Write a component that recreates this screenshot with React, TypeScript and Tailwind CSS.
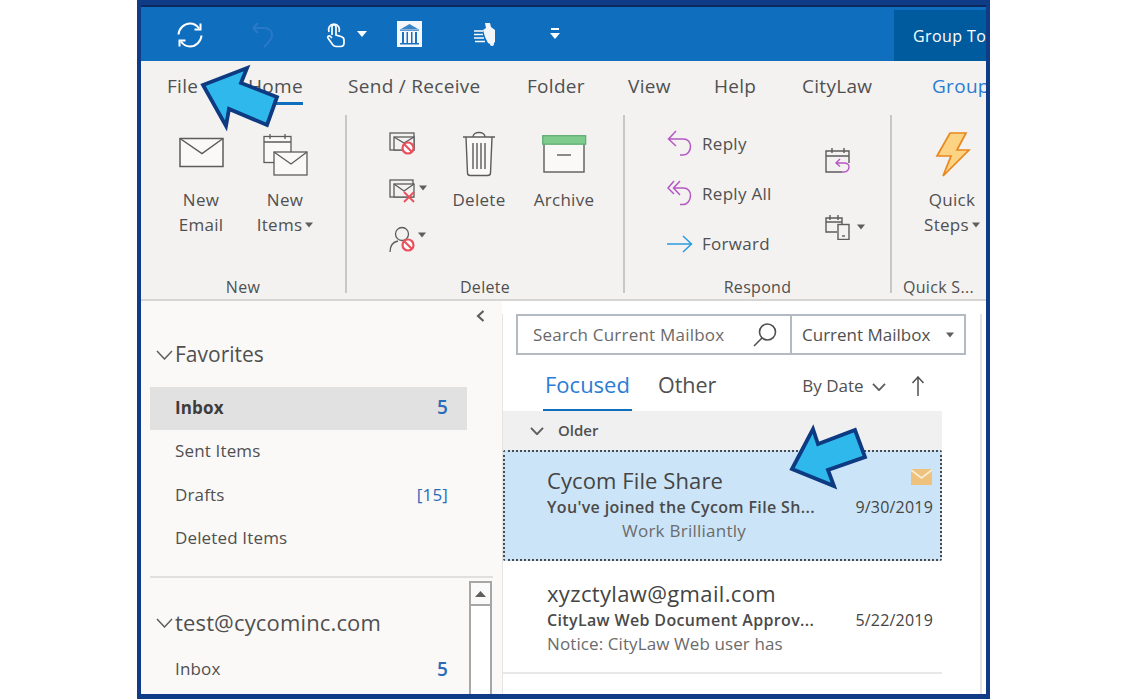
const FONT = "font-['Open_Sans','Noto_Sans',sans-serif]";

const Caret = ({ className = "", color = "#605e5c" }: { className?: string; color?: string }) => (
  <svg width="10" height="6" viewBox="0 0 10 6" className={className}><path d="M0 0h10L5 6z" fill={color} /></svg>
);

const Sync = () => (
  <svg width="28" height="28" viewBox="0 0 28 28" fill="none" stroke="#fff" strokeWidth="2">
    <path d="M2.500 13.500C3 7.500 8 2.500 14 2.500c4 0 7 2 9 5" />
    <path d="M24.500 2.500v6h-6" />
    <path d="M25.500 14.500c-.5 6-5.500 11-11.500 11-4 0-7-2-9-5" />
    <path d="M3.500 25.500v-6h6" />
  </svg>
);
const Undo = () => (
  <svg width="24" height="28" viewBox="0 0 24 28" fill="none" stroke="#2a79c9" strokeWidth="2">
    <path d="M2 8l5 5M2 8l5-5M2 8h11c5 0 8 3 8 7s-3 7-6 10l-2 2" />
  </svg>
);
const Touch = () => (
  <svg width="20" height="27" viewBox="0 0 20 27" fill="none" stroke="#fff" strokeWidth="1.700">
    <path d="M3 11a5.500 5.500 0 1 1 10 0" />
    <path d="M6 14V6a2 2 0 0 1 4 0v8l5 1.500c2 .6 3 1.600 3 3.500v3c0 2-1.500 3.500-3.500 3.500H10c-1.500 0-2.500-.7-3.500-2L2 17c-1-1.500 1-3 2.500-1.500L6 17" />
  </svg>
);
const Building = () => (
  <svg width="25" height="26" viewBox="0 0 25 26">
    <rect width="25" height="26" fill="#f4f8fc" />
    <path d="M4 8l8.500-5L21 8z" fill="#3a85c8" />
    <rect x="3" y="8.500" width="19" height="1.200" fill="#1d70bd" />
    <path d="M5 11h2v11H5zM9.500 11h1.500v11H9.500zM14 11h1.500v11H14zM18 11h2v11h-2z" fill="#1d70bd" />
    <rect x="3" y="22" width="19" height="1.500" fill="#1d70bd" />
  </svg>
);
const Runner = () => (
  <svg width="23" height="25" viewBox="0 0 23 25" fill="none">
    <path d="M11 1h5l1 4 4 3v12l-3 3-4-2-3-6-2-7 3-2z" fill="#f2f6fb" />
    <path d="M0 9h9M0 12.500h9M0 16h10M1 19.500h10" stroke="#fff" strokeWidth="1.500" />
    <circle cx="18" cy="22" r="2" fill="#f2f6fb" />
  </svg>
);
const Customize = () => (
  <svg width="10" height="14" viewBox="0 0 10 14">
    <rect x="1" y="1" width="8" height="2" fill="#fff" />
    <path d="M0 6h10l-5 6z" fill="#fff" />
  </svg>
);

const Envelope = () => (
  <svg width="46" height="32" viewBox="0 0 46 32" fill="#faf9f8" stroke="#5c5c5c" strokeWidth="1.500">
    <rect x="1" y="1.500" width="43" height="28" />
    <path d="M1 1.500l22 15 21-15" fill="none" />
  </svg>
);
const NewItems = () => (
  <svg width="46" height="44" viewBox="0 0 46 44" fill="none" stroke="#5c5c5c" strokeWidth="1.300">
    <rect x="1" y="3.500" width="27" height="26" fill="#faf9f8" />
    <path d="M1 9h27M7 1v5M22 1v5" />
    <rect x="11" y="19" width="33" height="23" fill="#faf9f8" />
    <path d="M11 19l17 12 16-12" />
  </svg>
);
const Ban = ({ x, y }: { x: number; y: number }) => (
  <g fill="none" stroke="#e8505b" strokeWidth="2.200">
    <circle cx={x} cy={y} r="5.500" fill="#fff" />
    <path d={`M${x - 4} ${y - 4}l8 8`} />
  </g>
);
const IgnoreIcon = () => (
  <svg width="27" height="24" viewBox="0 0 27 24" fill="none" stroke="#5c5c5c" strokeWidth="1.300">
    <rect x="1" y="1" width="24" height="17" />
    <rect x="5" y="5" width="20" height="13" fill="#f3f2f1" />
    <path d="M5 5l10 6 10-6" />
    <Ban x={19} y={16} />
  </svg>
);
const CleanIcon = () => (
  <svg width="27" height="24" viewBox="0 0 27 24" fill="none" stroke="#5c5c5c" strokeWidth="1.300">
    <rect x="1" y="1" width="23" height="17" />
    <rect x="5" y="5" width="20" height="13" fill="#f3f2f1" />
    <path d="M5 5l10 7 10-7" />
    <path d="M15 13l10 10M25 13L15 23" stroke="#e8505b" strokeWidth="1.800" />
  </svg>
);
const JunkIcon = () => (
  <svg width="26" height="27" viewBox="0 0 26 27" fill="none" stroke="#5c5c5c" strokeWidth="1.300">
    <circle cx="13" cy="8" r="6.500" />
    <path d="M1 26c0-6 3-10 8-11M17 14l3 2" />
    <Ban x={19} y={19} />
  </svg>
);
const Trash = () => (
  <svg width="34" height="46" viewBox="0 0 34 46" fill="#faf9f8" stroke="#5c5c5c" strokeWidth="1.400">
    <path d="M4 6l1.500 36q0 2.500 3 2.500h17q3 0 3-2.500L30 6" />
    <path d="M1 6h32M11 6c0-6 12-6 12 0" />
    <path d="M11 12v26M15 12v26M19 12v26M23 12v26" fill="none" />
  </svg>
);
const ArchiveIcon = () => (
  <svg width="45" height="38" viewBox="0 0 45 38">
    <rect x="2" y="8" width="40" height="29" fill="#faf9f8" stroke="#5c5c5c" strokeWidth="1.400" />
    <rect x=".7" y=".7" width="43" height="8.500" fill="#7fcb8e" stroke="#5cab70" strokeWidth="1.200" />
    <path d="M15 20h14" stroke="#5c5c5c" strokeWidth="1.400" />
  </svg>
);
const ReplyIcon = () => (
  <svg width="26" height="27" viewBox="0 0 26 27" fill="none" stroke="#b557c4" strokeWidth="1.500">
    <path d="M9 1L1.500 9 9 16M1.500 9h15c4 0 7 3 7 7.500s-3 8.500-7.500 8.500h-3" />
  </svg>
);
const ReplyAllIcon = () => (
  <svg width="26" height="27" viewBox="0 0 26 27" fill="none" stroke="#b557c4" strokeWidth="1.500">
    <path d="M7 1L1 8l6 6M13 1L6.500 8l6.500 7M6.500 8h10c4 0 7 3 7 7.500s-3 9-7.500 9h-3" />
  </svg>
);
const ForwardIcon = () => (
  <svg width="26" height="18" viewBox="0 0 26 18" fill="none" stroke="#2b9be0" strokeWidth="1.500">
    <path d="M0 9h24M16 1l8.500 8-8.500 8" />
  </svg>
);
const CalReply = () => (
  <svg width="26" height="27" viewBox="0 0 26 27" fill="none" strokeWidth="1.400">
    <path d="M17 25H1V4h23v12M1 9h23M7 1v5M19 1v5" stroke="#5c5c5c" />
    <path d="M15 12l-4 4 4 3.500M11 16h8c3 0 5 1.500 5 4s-2 5-5 5h-2" stroke="#b557c4" />
  </svg>
);
const CalDevice = () => (
  <svg width="25" height="26" viewBox="0 0 25 26" fill="none" stroke="#5c5c5c" strokeWidth="1.400">
    <path d="M12 18H1V4h16v6M1 8h16M5 1v5M13 1v5" />
    <rect x="13" y="10.500" width="11" height="15" />
    <path d="M17 22h3" />
  </svg>
);
const Bolt = () => (
  <svg width="36" height="46" viewBox="0 0 36 46">
    <path d="M15 1h16L22 18h12L8 44l8-20H2z" fill="#fcd382" stroke="#e8871e" strokeWidth="1.700" strokeLinejoin="miter" />
  </svg>
);
const Chevron = ({ size = 17, color = "#605e5c", sw = 1.5 }: { size?: number; color?: string; sw?: number }) => (
  <svg width={size} height={Math.round(size * 0.6)} viewBox="0 0 17 10" fill="none" stroke={color} strokeWidth={sw}>
    <path d="M1 1l7.500 8L16 1" />
  </svg>
);
const Big = ({ icon, l1, l2, caret, iconH }: { icon: React.ReactNode; l1: string; l2?: string; caret?: boolean; iconH: string }) => (
  <div className="flex flex-col items-center text-[17px] leading-[25px] tracking-[0.3px] text-[#505050]">
    <div className={`flex items-end justify-center ${iconH}`}>{icon}</div>
    <div>{l1}</div>
    {l2 && <div className="flex items-center gap-[3px]">{l2}{caret && <Caret className="w-[8px]" />}</div>}
  </div>
);
const Arrow = ({ points, className }: { points: string; className: string }) => (
  <svg className={`absolute ${className}`} width="90" height="70" viewBox="0 0 90 70">
    <polygon points={points} fill="#2fb8ec" stroke="#0d3a80" strokeWidth="3.800" strokeLinejoin="miter" />
  </svg>
);
const Count = ({ children }: { children: React.ReactNode }) => (
  <span className="text-[#2b6cb8] text-[19px] font-semibold leading-none">{children}</span>
);
const GroupLabel = ({ children }: { children: React.ReactNode }) => (
  <div className="text-center text-[16px] leading-[20px] tracking-[0.3px] text-[#505050] -mb-[4px]">{children}</div>
);

export default function App() {
  return (
    <div className={`relative w-[1124px] h-[699px] bg-white overflow-hidden ${FONT}`}>
      <div className="ml-[137px] w-[853px] h-[699px] border-x-4 border-t-[5px] border-b-[5px] border-[#0f3b87] flex flex-col overflow-hidden">
        <div className="h-[2px] bg-[#0a2a5e] shrink-0" />
        {/* title bar */}
        <div className="h-[54px] shrink-0 bg-[#106ebe] flex items-center relative">
          <div className="ml-[35px] w-[28px] mt-[2px]"><Sync /></div>
          <div className="ml-[47px]"><Undo /></div>
          <div className="ml-[51px]"><Touch /></div>
          <Caret color="#fff" className="ml-[11px]" />
          <div className="ml-[30px]"><Building /></div>
          <div className="ml-[52px]"><Runner /></div>
          <div className="ml-[53px]"><Customize /></div>
          <div className="ml-auto self-end h-[51px] w-[92px] bg-[#005a9e] pl-[19px] flex items-center text-white text-[16px] tracking-[0.4px] font-medium whitespace-nowrap overflow-hidden">Group To</div>
        </div>
        {/* ribbon */}
        <div className="h-[240px] shrink-0 bg-[#f3f2f1] border-b-2 border-[#d6d5d3] flex flex-col">
          <div className="h-[54px] flex pl-[26px] items-start pt-[11px] text-[19px] leading-[28px] tracking-[0.3px] text-[#505050] whitespace-nowrap">
            <div className="w-[81px] shrink-0">File</div>
            <div className="w-[100px] shrink-0"><span className="inline-block border-b-[3px] border-[#106ebe] h-[33px]">Home</span></div>
            <div className="w-[179px] shrink-0">Send / Receive</div>
            <div className="w-[101px] shrink-0">Folder</div>
            <div className="w-[86px] shrink-0">View</div>
            <div className="w-[88px] shrink-0">Help</div>
            <div className="w-[130px] shrink-0">CityLaw</div>
            <div className="shrink-0 text-[#2b7cd3]">Group</div>
          </div>
          <div className="flex h-[178px]">
            {/* New */}
            <div className="w-[206px] shrink-0 border-r-2 border-[#c8c7c5] flex flex-col justify-between">
              <div className="flex pl-[18px]">
                <div className="w-[84px]"><Big iconH="h-[72px] pb-[18px] pl-[1px]" icon={<Envelope />} l1="New" l2="Email" /></div>
                <div className="w-[84px]"><Big iconH="h-[72px] pb-[10px] pl-[2px]" icon={<NewItems />} l1="New" l2="Items" caret /></div>
              </div>
              <GroupLabel>New</GroupLabel>
            </div>
            {/* Delete */}
            <div className="w-[278px] shrink-0 border-r-2 border-[#c8c7c5] flex flex-col justify-between">
              <div className="flex">
                <div className="w-[42px] ml-[42px] pt-[17px] flex flex-col gap-[23px]">
                  <IgnoreIcon />
                  <div className="flex items-start gap-[3px]"><CleanIcon /><Caret className="w-[8px] mt-[6px]" /></div>
                  <div className="flex items-start gap-[3px]"><JunkIcon /><Caret className="w-[8px] mt-[6px]" /></div>
                </div>
                <div className="w-[86px] ml-[5px]"><Big iconH="h-[72px] pb-[10px]" icon={<Trash />} l1="Delete" /></div>
                <div className="w-[84px]"><Big iconH="h-[72px] pb-[14px]" icon={<ArchiveIcon />} l1="Archive" /></div>
              </div>
              <GroupLabel>Delete</GroupLabel>
            </div>
            {/* Respond */}
            <div className="w-[267px] shrink-0 border-r-2 border-[#c8c7c5] flex flex-col justify-between">
              <div className="flex pt-[15px]">
                <div className="w-[158px] pl-[42px] flex flex-col gap-[23px] text-[17px] leading-[27px] tracking-[0.3px] text-[#505050]">
                  <div className="flex items-center gap-[9px]"><ReplyIcon />Reply</div>
                  <div className="flex items-center gap-[9px]"><ReplyAllIcon />Reply All</div>
                  <div className="flex items-center gap-[9px]"><ForwardIcon />Forward</div>
                </div>
                <div className="ml-[42px] pt-[17px] flex flex-col gap-[40px]">
                  <CalReply />
                  <div className="flex items-center gap-[7px]"><CalDevice /><Caret className="w-[8px]" /></div>
                </div>
              </div>
              <GroupLabel>Respond</GroupLabel>
            </div>
            {/* Quick */}
            <div className="w-[94px] shrink-0 flex flex-col justify-between">
              <div className="w-[120px]"><Big iconH="h-[72px] pb-[9px] pl-[2px]" icon={<Bolt />} l1="Quick" l2="Steps" caret /></div>
              <div className="pl-[11px] text-[16px] leading-[20px] tracking-[0.3px] text-[#505050] whitespace-nowrap -mb-[4px]">Quick S...</div>
            </div>
          </div>
        </div>
        {/* lower */}
        <div className="flex-1 flex min-h-0">
          {/* folders */}
          <div className="w-[361px] shrink-0 bg-[#faf9f8] flex flex-col text-[#505050]">
            <div className="h-[29px] flex justify-end items-center pr-[17px]">
              <svg width="9" height="12" viewBox="0 0 9 12" fill="none" stroke="#605e5c" strokeWidth="2.200"><path d="M7.500 1L2 6l5.500 5" /></svg>
            </div>
            <div className="h-[49px] flex items-center pl-[15px] text-[21px]">
              <Chevron />
              <span className="ml-[2px]">Favorites</span>
            </div>
            <div className="ml-[9px] w-[317px] text-[17px] tracking-[0.15px]">
              <div className="h-[8px]" />
              <div className="h-[43px] bg-[#e1e1e1] flex items-center justify-between pl-[25px] pr-[19px] pb-[2px]"><span className="font-bold text-[#3c3c3c]">Inbox</span><Count>5</Count></div>
              <div className="h-[44px] flex items-center pl-[25px] pb-[2px]">Sent Items</div>
              <div className="h-[43px] flex items-center justify-between pl-[25px] pr-[19px] pb-[2px]">Drafts<span className="text-[#2b6cb8]">[15]</span></div>
              <div className="h-[44px] flex items-center pl-[25px] pb-[2px]">Deleted Items</div>
            </div>
            <div className="mt-[15px] ml-[9px] w-[343px] h-[2px] bg-[#e1e0de]" />
            <div className="flex-1 flex min-h-0">
              <div className="w-[328px]">
                <div className="h-[45px] mt-[22px] flex items-center pl-[15px] text-[22px] tracking-[0.15px] whitespace-nowrap">
                  <Chevron />
                  <span className="ml-[2px]">test@cycominc.com</span>
                </div>
                <div className="ml-[9px] mt-[2px] w-[317px] h-[44px] flex items-center justify-between pl-[25px] pr-[19px] text-[17px] tracking-[0.15px]">Inbox<Count>5</Count></div>
              </div>
              <div className="w-[23px] mt-[3px] border-x-2 border-t-2 border-[#a6a6a6] bg-white">
                <div className="h-[23px] border-b-2 border-[#a6a6a6] flex items-center justify-center bg-[#fafafa]">
                  <svg width="11" height="6" viewBox="0 0 11 6"><path d="M0 6h11L5.500 0z" fill="#605e5c" /></svg>
                </div>
              </div>
            </div>
          </div>
          {/* list */}
          <div className="flex-1 flex bg-white">
            <div className="w-[480px] mt-[13px] border-r-2 border-l border-[#e4e4e4] flex flex-col">
              <div className="ml-[13px] w-[450px] h-[41px] border-2 border-[#b4bac2] flex items-center text-[17px] text-[#6a6a6a]">
                <div className="w-[274px] h-full border-r-2 border-[#b4bac2] flex items-center justify-between pl-[15px] pr-[12px]">
                  <span className="tracking-[0.22px]">Search Current Mailbox</span>
                  <svg width="26" height="26" viewBox="0 0 26 26" fill="none" stroke="#505050" strokeWidth="1.600"><circle cx="15.500" cy="10" r="8" /><path d="M10 16L2 24" /></svg>
                </div>
                <div className="flex-1 flex items-center justify-between pl-[10px] pr-[10px] text-[#505050]">
                  <span>Current Mailbox</span><Caret className="w-[8px]" />
                </div>
              </div>
              <div className="h-[56px] flex items-center shrink-0 relative">
                <span className="ml-[40px] h-[56px] flex items-center border-b-2 border-[#106ebe] px-[2px] text-[22px] text-[#2b7cd3] pt-[4px]">Focused</span>
                <span className="ml-[26px] text-[21.5px] text-[#505050] pt-[4px]">Other</span>
                <span className="ml-[86px] text-[17px] text-[#505050] pt-[6px]">By Date</span>
                <span className="ml-[8px] pt-[7px]"><Chevron size={14} sw={2.200} /></span>
                <svg className="ml-[25px] mt-[6px]" width="14" height="20" viewBox="0 0 14 20" fill="none" stroke="#505050" strokeWidth="1.500"><path d="M7 20V1M1.500 7L7 1l5.500 6" /></svg>
              </div>
              <div className="w-[439px]">
                <div className="h-[39px] bg-[#f0f0f0] flex items-center pl-[27px] text-[15px] font-semibold text-[#505050]">
                  <Chevron size={14} sw={2.400} /><span className="ml-[14px]">Older</span>
                </div>
                <div className="h-[111px] bg-[#cce4f7] border-2 border-dotted border-[#4a4a4a] rounded-[2px] pl-[42px] pr-[7px] relative text-[#444]">
                  <div className="flex justify-between pt-[13px]">
                    <span className="text-[22px] leading-[30px] tracking-[0.1px]">Cycom File Share</span>
                    <svg className="mt-[4px] mr-[1px]" width="21" height="16" viewBox="0 0 21 16"><rect width="21" height="16" fill="#eec27c" /><path d="M0 1l10.500 8L21 1" fill="none" stroke="#fbeed8" strokeWidth="1.600" /></svg>
                  </div>
                  <div className="flex justify-between text-[16px] leading-[22px] mt-[1px]">
                    <span className="font-semibold tracking-[0.35px] text-[#4a4a4a] whitespace-nowrap">You've joined the Cycom File Sh...</span>
                    <span className="tracking-[0.2px]">9/30/2019</span>
                  </div>
                  <div className="pl-[75px] text-[17px] leading-[24px] tracking-[0.25px] mt-[1px] text-[#6b6b6b]">Work Brilliantly</div>
                </div>
                <div className="h-[113px] border-b-2 border-[#e8e8e8] pl-[44px] pr-[9px] text-[#444]">
                  <div className="text-[22px] leading-[30px] tracking-[0.35px] pt-[17px] box-content">xyzctylaw@gmail.com</div>
                  <div className="flex justify-between text-[16px] leading-[22px] mt-[1px]">
                    <span className="font-semibold tracking-[0.35px] text-[#4a4a4a] whitespace-nowrap">CityLaw Web Document Approv...</span>
                    <span className="tracking-[0.2px]">5/22/2019</span>
                  </div>
                  <div className="text-[17px] leading-[26px] tracking-[0.1px] text-[#6b6b6b]">Notice: CityLaw Web user has</div>
                </div>
              </div>
            </div>
          </div>
        </div>
      </div>
      {/* callout arrows */}
      <Arrow className="left-[195px] top-[62px]" points="8,23 52,6 46,21 82,35 72,63 34,47 31,64" />
      <Arrow className="left-[785px] top-[424px]" points="7,45 28,5 33,20 70,6 80,33 43,46 49,62" />
    </div>
  );
}
